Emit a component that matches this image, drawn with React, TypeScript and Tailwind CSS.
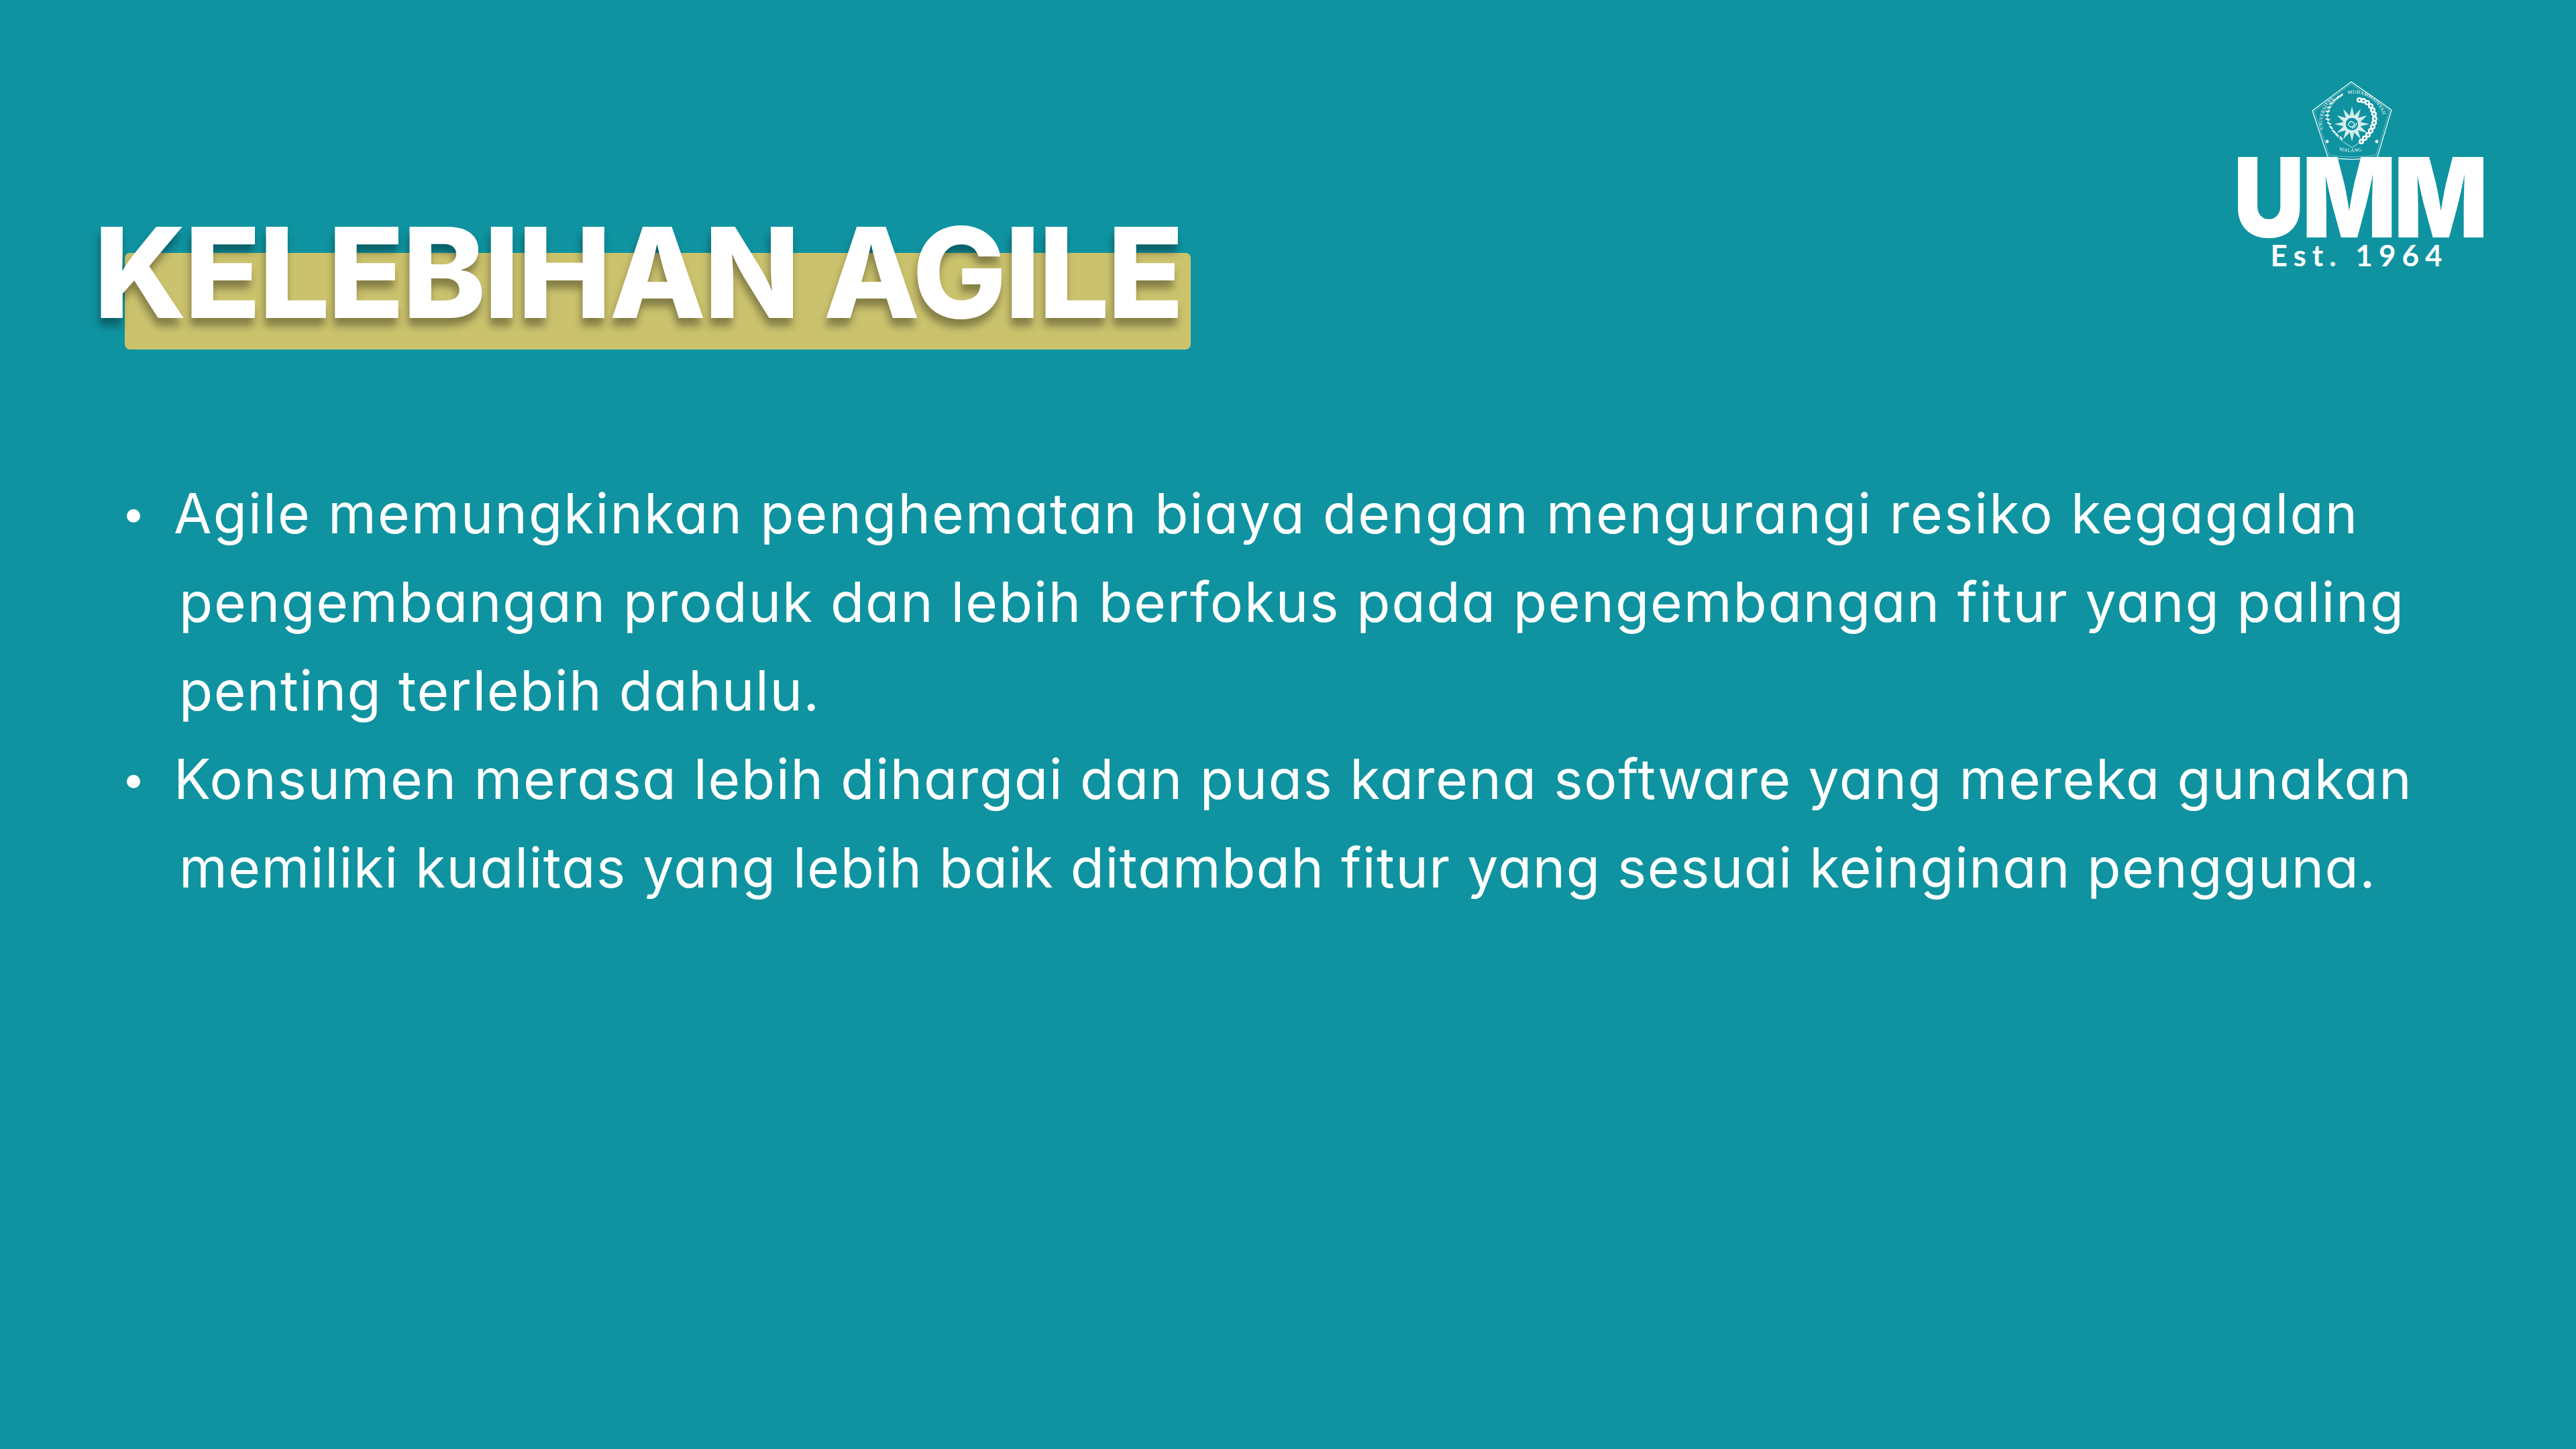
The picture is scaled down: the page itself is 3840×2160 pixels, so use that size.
const starPoints = Array.from({ length: 24 }, (_, i) => {
	const r = i % 2 === 0 ? 26 : 13;
	const a = (i * Math.PI) / 12 - Math.PI / 2;
	return `${60 + r * Math.cos(a)},${64 + r * Math.sin(a)}`;
}).join(" ");

// links of the chain on the right of the emblem
const chain = [
	[71, 28], [77, 29], [83, 32], [88, 37], [91, 43], [93, 49], [94, 56], [93, 62],
	[91, 68], [88, 74], [84, 80], [79, 85], [74, 90],
];

const leaves = [
	[44, 21, -50], [39, 24, -45], [34, 28, -40], [29, 33, -30], [26, 39, -20], [24, 45, -10],
	[23, 51, 0], [24, 57, 10], [26, 63, 25], [29, 69, 35], [33, 75, 40], [38, 80, 50], [44, 85, 55],
];

function Emblem() {
	return (
		<svg viewBox="0 0 120 118" className="w-[120px] h-[118px] block -ml-[22px]" fill="none">
			<path d="M59 1 L119 43 L98 113 Q60 120 24 113 L1 44 Z" stroke="#fff" strokeWidth="1.2" />
			<path d="M59 4 L116 44 L96 110 Q60 116 26 110 L4 45 Z" stroke="#fff" strokeWidth="0.5" opacity="0.8" />
			<defs>
				<path id="arc-left" d="M17 72 A46 46 0 0 1 44 20" />
				<path id="arc-right" d="M54 19 A46 46 0 0 1 108 68" />
				<path id="arc-bottom" d="M36 102 Q60 109 84 102" />
			</defs>
			<text fontFamily="'Liberation Serif', serif" fontSize="7.4" fill="#fff" letterSpacing="0.2">
				<textPath href="#arc-left">UNIVERSITAS</textPath>
			</text>
			<text fontFamily="'Liberation Serif', serif" fontSize="7.4" fill="#fff" letterSpacing="0.2">
				<textPath href="#arc-right">MUHAMMADIYAH</textPath>
			</text>
			<text fontFamily="'Liberation Serif', serif" fontSize="7.4" fill="#fff" letterSpacing="0.3">
				<textPath href="#arc-bottom" startOffset="5">MALANG</textPath>
			</text>
			<polygon points={starPoints} fill="#d5edef" />
			<circle cx="60" cy="64" r="10" fill="#0f93a0" stroke="#fff" strokeWidth="1" />
			<path d="M54 66 Q57 58 61 61 Q66 63 62 67 Q58 70 56 66 M60 70 Q66 69 67 62" stroke="#fff" strokeWidth="1.3" />
			<path d="M47 20 Q26 34 23 51 Q24 72 46 90" stroke="#fff" strokeWidth="0.8" />
			{leaves.map(([x, y, r], i) => (
				<ellipse key={i} cx={x} cy={y} rx="3.4" ry="1.2" fill="#fff" transform={`rotate(${r} ${x} ${y})`} />
			))}
			{chain.map(([x, y], i) => (
				<circle key={i} cx={x} cy={y} r="2.8" stroke="#fff" strokeWidth="2.6" fill="#0f93a0" />
			))}
			<path d="M47 90 L60 99 L74 90" stroke="#fff" strokeWidth="0.8" />
			<circle cx="23" cy="90" r="2.4" fill="#fff" />
			<circle cx="97" cy="90" r="2.4" fill="#fff" />
		</svg>
	);
}

function Logo() {
	return (
		<div className="flex flex-col items-center w-[364px] text-white">
			<Emblem />
			<div className="h-[120px] -mt-[5px] font-['Inter',sans-serif] font-black text-[165px] leading-[120px] tracking-[-4px] scale-x-[0.89] whitespace-nowrap">
				UMM
			</div>
			<div className="mt-[4px] font-['Lato',sans-serif] font-bold text-[44px] leading-[44px] tracking-[9px] whitespace-nowrap">
				Est. 1964
			</div>
		</div>
	);
}

function Title() {
	return (
		<div className="relative mt-[190px] w-fit">
			<div className="absolute left-[46px] top-[66px] w-[1589px] h-[144px] rounded-[8px] bg-[#cbc26d]" />
			<h1 className="relative font-['Inter',sans-serif] font-extrabold text-[187px] leading-[190px] tracking-[-3px] text-white [text-shadow:-2px_12px_12px_rgba(0,0,0,0.35)] whitespace-nowrap">
				KELEBIHAN AGILE
			</h1>
		</div>
	);
}

type Line = { text: string; className: string };

function Bullet({ lines }: { lines: Line[] }) {
	return (
		<li className="flex">
			<span className="mt-[59px] w-[20px] h-[20px] shrink-0 rounded-full bg-white" />
			<div className="ml-[58px] flex flex-col">
				{lines.map((line, i) => (
					<span key={line.text} className={`whitespace-nowrap ${line.className} ${i === 0 ? "-ml-[8px]" : ""}`}>
						{line.text}
					</span>
				))}
			</div>
		</li>
	);
}

export default function App() {
	return (
		<div className="w-[3840px] h-[2160px] bg-[#0f93a0] flex flex-col">
			<header className="flex justify-between items-start pl-[140px] pr-[141px] pt-[121px]">
				<Title />
				<Logo />
			</header>
			<ul className="mt-[199px] pl-[189px] flex flex-col font-['Inter',sans-serif] [font-feature-settings:'cv11'] text-[82px] leading-[132px] text-white">
				<Bullet
					lines={[
						{ text: "Agile memungkinkan penghematan biaya dengan mengurangi resiko kegagalan", className: "tracking-[2.1px]" },
						{ text: "pengembangan produk dan lebih berfokus pada pengembangan fitur yang paling", className: "tracking-[1.9px]" },
						{ text: "penting terlebih dahulu.", className: "tracking-[1.5px]" },
					]}
				/>
				<Bullet
					lines={[
						{ text: "Konsumen merasa lebih dihargai dan puas karena software yang mereka gunakan", className: "tracking-[1.67px]" },
						{ text: "memiliki kualitas yang lebih baik ditambah fitur yang sesuai keinginan pengguna.", className: "tracking-[1.46px]" },
					]}
				/>
			</ul>
		</div>
	);
}
